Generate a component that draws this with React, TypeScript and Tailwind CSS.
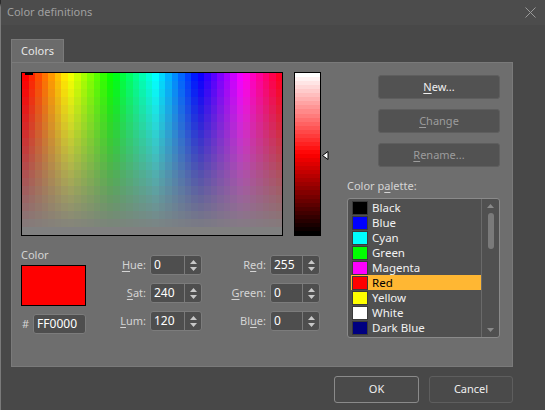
import React from 'react'

const FONT = { fontFamily: '"Noto Sans", "Open Sans", sans-serif' }

const palette = [
  { name: 'Black', color: '#000000' },
  { name: 'Blue', color: '#0000ff' },
  { name: 'Cyan', color: '#00ffff' },
  { name: 'Green', color: '#00ff00' },
  { name: 'Magenta', color: '#ff00ff' },
  { name: 'Red', color: '#ff0000' },
  { name: 'Yellow', color: '#ffff00' },
  { name: 'White', color: '#ffffff' },
  { name: 'Dark Blue', color: '#000080' },
]

// banded hue / saturation field, like the classic Windows picker
const Spectrum: React.FC = () => {
  const cols = 40
  const rows = 20
  const w = 260
  const h = 162
  const cells = []
  for (let r = 0; r < rows; r++) {
    for (let c = 0; c < cols; c++) {
      const hue = (c / cols) * 360
      const sat = 100 - (r / (rows - 1)) * 100
      cells.push(
        <rect
          key={`${r}-${c}`}
          x={(c * w) / cols}
          y={(r * h) / rows}
          width={w / cols + 0.5}
          height={h / rows + 0.5}
          fill={`hsl(${hue}, ${sat}%, 50%)`}
        />,
      )
    }
  }
  return (
    <svg width={w} height={h} shapeRendering="crispEdges" className="block">
      {cells}
      <rect x={3} y={0} width={8} height={1.5} fill="#000" />
    </svg>
  )
}

const LumBar: React.FC = () => {
  const bands = 40
  const h = 162
  return (
    <svg width={25} height={h} shapeRendering="crispEdges" className="block">
      {Array.from({ length: bands }).map((_, i) => (
        <rect
          key={i}
          x={0}
          y={(i * h) / bands}
          width={25}
          height={h / bands + 0.5}
          fill={`hsl(0, 100%, ${100 - (i / (bands - 1)) * 100}%)`}
        />
      ))}
    </svg>
  )
}

const Mn: React.FC<{ children: React.ReactNode }> = ({ children }) => <span className="underline underline-offset-2">{children}</span>

const Spin: React.FC<{ value: string; w: string }> = ({ value, w }) => (
  <div className={`flex h-[20px] ${w} items-center rounded-[3px] border border-[#7c7c7c] bg-[#4e4e4e]`}>
    <span className="flex-1 pl-[3px] text-[12px] leading-none text-white">{value}</span>
    <div className="flex h-full w-[17px] flex-col items-center justify-center gap-[3px] border-l border-[#7a7a7a]">
      <svg width="7" height="4" viewBox="0 0 7 4"><path d="M0 4 L3.5 0 L7 4 Z" fill="#c8c8c8" /></svg>
      <svg width="7" height="4" viewBox="0 0 7 4"><path d="M0 0 L3.5 4 L7 0 Z" fill="#c8c8c8" /></svg>
    </div>
  </div>
)

const Field: React.FC<{ label: React.ReactNode; value: string; labelW: string; inputW: string }> = ({ label, value, labelW, inputW }) => (
  <div className="flex items-center gap-[4px]">
    <span className={`${labelW} text-right text-[11px] text-[#d4d4d4]`}>{label}</span>
    <Spin value={value} w={inputW} />
  </div>
)

export default function App() {
  return (
    <div className="h-[410px] w-[545px] overflow-hidden bg-[#2b2b2b]" style={FONT}>
      <div className="flex h-[410px] flex-col rounded-tl-[7px] border-l border-[#7a7a7a] bg-[#484848]">
        {/* title bar */}
        <div className="flex h-[25px] items-center justify-between bg-[#4c4c4c] pl-[6px] pr-[9px]">
          <span className="text-[11px] text-[#a0a0a0]">Color definitions</span>
          <svg width="11" height="11" viewBox="0 0 11 11">
            <path d="M0.5 0.5 L10.5 10.5 M10.5 0.5 L0.5 10.5" stroke="#9a9a9a" strokeWidth="1" />
          </svg>
        </div>

        {/* tab */}
        <div className="mt-[14px] pl-[10px]">
          <div className="flex h-[23px] w-[53px] items-center justify-center border border-b-0 border-[#7a7a7a] bg-[#6b6b6b] text-[11px] text-[#e8e8e8]">
            Colors
          </div>
        </div>

        {/* panel */}
        <div className="ml-[10px] flex h-[305px] w-[502px] border border-[#7a7a7a] bg-[#6e6e6e]">
          <div className="flex w-[325px] flex-col pl-[9px] pt-[9px]">
            <div className="flex items-start">
              <div className="border border-black">
                <Spectrum />
              </div>
              <div className="relative ml-[11px] border border-black">
                <LumBar />
                <svg className="absolute left-[27px] top-[78px]" width="7" height="9" viewBox="0 0 7 9">
                  <path d="M0.5 4.5 L6 0.5 L6 8.5 Z" fill="#fff" stroke="#000" strokeWidth="1" />
                </svg>
              </div>
            </div>

            <div className="mt-[11px] flex">
              <div className="flex w-[90px] flex-col">
                <span className="text-[11px] leading-[16px] text-[#d4d4d4]">Color</span>
                <div className="mt-[2px] h-[41px] w-[65px] border border-black bg-[#ff0000]" />
                <div className="mt-[8px] flex items-center gap-[4px] pl-[1px]">
                  <span className="text-[11px] text-[#d4d4d4]">#</span>
                  <div className="flex h-[20px] w-[53px] items-center rounded-[3px] border border-[#7c7c7c] bg-[#4e4e4e] pl-[3px] text-[12px] text-white">
                    FF0000
                  </div>
                </div>
              </div>
              <div className="mt-[8px] flex flex-col gap-[8px]">
                <Field label={<><Mn>H</Mn>ue:</>} value="0" labelW="w-[35px]" inputW="w-[52px]" />
                <Field label={<><Mn>S</Mn>at:</>} value="240" labelW="w-[35px]" inputW="w-[52px]" />
                <Field label={<><Mn>L</Mn>um:</>} value="120" labelW="w-[35px]" inputW="w-[52px]" />
              </div>
              <div className="ml-[14px] mt-[8px] flex flex-col gap-[8px]">
                <Field label={<>R<Mn>e</Mn>d:</>} value="255" labelW="w-[50px]" inputW="w-[50px]" />
                <Field label={<><Mn>G</Mn>reen:</>} value="0" labelW="w-[50px]" inputW="w-[50px]" />
                <Field label={<>Bl<Mn>u</Mn>e:</>} value="0" labelW="w-[50px]" inputW="w-[50px]" />
              </div>
            </div>
          </div>

          <div className="flex flex-col pl-[10px] pt-[12px]">
            <div className="ml-[31px] flex flex-col gap-[10px]">
              <div className="flex h-[24px] w-[122px] items-center justify-center rounded-[3px] border border-[#5e5e5e] bg-[#525252] text-[11px] text-[#f0f0f0]">
                <span><Mn>N</Mn>ew...</span>
              </div>
              <div className="flex h-[24px] w-[122px] items-center justify-center rounded-[3px] border border-[#5e5e5e] bg-[#525252] text-[11px] text-[#9c9c9c]">
                <span><Mn>C</Mn>hange</span>
              </div>
              <div className="flex h-[24px] w-[122px] items-center justify-center rounded-[3px] border border-[#5e5e5e] bg-[#525252] text-[11px] text-[#9c9c9c]">
                <span><Mn>R</Mn>ename...</span>
              </div>
            </div>
            <span className="mt-[11px] text-[11px] leading-[16px] text-[#d4d4d4]">
              Color p<Mn>a</Mn>lette:
            </span>
            <div className="mt-[4px] flex h-[140px] w-[153px] rounded-[3px] border border-[#8a8a8a] bg-[#505050]">
              <div className="flex flex-1 flex-col pl-[3px] pt-[1px]">
                {palette.map((p) => (
                  <div
                    key={p.name}
                    className={`flex h-[15px] items-center gap-[4px] ${p.name === 'Red' ? 'bg-[#ffb733] text-black' : 'text-[#f2f2f2]'}`}
                  >
                    <div className="ml-[1px] h-[14px] w-[16px] shrink-0 border border-[#3a3a3a]" style={{ backgroundColor: p.color }} />
                    <span className="text-[11.5px] leading-[14px]">{p.name}</span>
                  </div>
                ))}
              </div>
              <div className="flex w-[18px] flex-col items-center border-l border-[#6a6a6a] py-[5px]">
                <svg width="7" height="4" viewBox="0 0 7 4"><path d="M0 4 L3.5 0 L7 4 Z" fill="#8a8a8a" /></svg>
                <div className="mt-[5px] h-[36px] w-[6px] rounded-full bg-[#7a7a7a]" />
                <div className="flex-1" />
                <svg width="7" height="4" viewBox="0 0 7 4"><path d="M0 0 L3.5 4 L7 0 Z" fill="#8a8a8a" /></svg>
              </div>
            </div>
          </div>
        </div>

        {/* dialog buttons */}
        <div className="mt-[9px] flex justify-end gap-[10px] pr-[32px]">
          <div className="flex h-[27px] w-[85px] items-center justify-center rounded-[3px] border border-[#8a8a8a] bg-[#4a4a4a] text-[11px] text-[#f0f0f0]">
            OK
          </div>
          <div className="flex h-[27px] w-[84px] items-center justify-center rounded-[3px] border border-[#5e5e5e] bg-[#4a4a4a] text-[11px] text-[#f0f0f0]">
            Cancel
          </div>
        </div>
      </div>
    </div>
  )
}
